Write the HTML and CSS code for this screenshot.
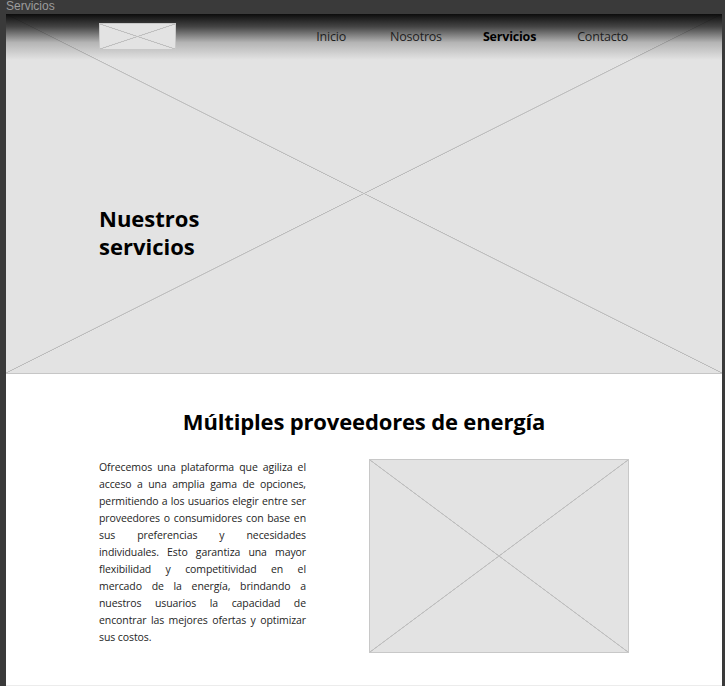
FILE: index.html
```html
<!DOCTYPE html>
<html lang="es">
<head>
<meta charset="utf-8">
<title>Servicios</title>
<link rel="stylesheet" href="styles.css">
</head>
<body>
<div class="titlebar">Servicios</div>
<div class="frame">
  <section class="hero">
    <header class="header">
      <div class="container header-inner">
        <div class="logo placeholder"></div>
        <nav class="nav">
          <a class="nav-link first">Inicio</a>
          <a class="nav-link">Nosotros</a>
          <a class="nav-link active">Servicios</a>
          <a class="nav-link">Contacto</a>
        </nav>
      </div>
    </header>
    <div class="container">
      <h1 class="hero-title">Nuestros<br>servicios</h1>
    </div>
  </section>
  <section class="content">
    <h2 class="content-title">Múltiples proveedores de energía</h2>
    <div class="container grid">
      <p class="text">Ofrecemos una plataforma que agiliza el acceso a una amplia gama de opciones, permitiendo a los usuarios elegir entre ser proveedores o consumidores con base en sus preferencias y necesidades individuales. Esto garantiza una mayor <span class="line">flexibilidad y competitividad en el</span> mercado de la energía, brindando a nuestros usuarios la capacidad de encontrar las mejores ofertas y optimizar sus costos.</p>
      <div class="image placeholder"></div>
    </div>
  </section>
</div>
</body>
</html>
```
FILE: styles.css
```css
* { box-sizing: border-box; }
html, body { margin: 0; padding: 0; }
body {
  background: #3a3a3a;
  width: 725px;
  height: 686px;
  overflow: hidden;
  font-family: "Open Sans", "Noto Sans", sans-serif;
}
.titlebar {
  height: 14px;
  padding-left: 6px;
  font-family: "Liberation Sans", Arial, sans-serif;
  font-size: 12px;
  line-height: 12px;
  color: #9c9c9c;
}
.frame {
  margin-left: 6px;
  width: 716px;
  height: 672px;
  background: #fff;
  border-bottom: 1px solid #ececec;
  overflow: hidden;
}
.placeholder {
  background-color: #e3e3e3;
  background-image:
    linear-gradient(to top right, transparent calc(50% - 0.7px), #bfbfbf calc(50% - 0.3px), #bfbfbf calc(50% + 0.3px), transparent calc(50% + 0.7px)),
    linear-gradient(to bottom right, transparent calc(50% - 0.7px), #bfbfbf calc(50% - 0.3px), #bfbfbf calc(50% + 0.3px), transparent calc(50% + 0.7px));
}
.hero {
  height: 360px;
  border-bottom: 1px solid #c6c6c6;
  background-color: #e3e3e3;
  background-image:
    linear-gradient(to top right, transparent calc(50% - 0.7px), #bdbdbd calc(50% - 0.3px), #bdbdbd calc(50% + 0.3px), transparent calc(50% + 0.7px)),
    linear-gradient(to bottom right, transparent calc(50% - 0.7px), #bdbdbd calc(50% - 0.3px), #bdbdbd calc(50% + 0.3px), transparent calc(50% + 0.7px));
}
.container {
  width: 530px;
  margin: 0 auto;
}
.header {
  height: 46px;
  background: linear-gradient(to bottom, rgba(8,8,8,0.98) 0%, rgba(30,30,30,0.8) 28%, rgba(110,110,110,0.4) 62%, rgba(227,227,227,0) 100%);
}
.header-inner {
  display: flex;
  align-items: flex-start;
  justify-content: space-between;
  padding-top: 9px;
}
.logo {
  width: 77px;
  height: 27px;
  border: 1px solid #c8c8c8;
}
.nav {
  display: flex;
  gap: 41px;
  padding-top: 5px;
  padding-right: 1px;
}
.nav-link {
  font-size: 12.5px;
  line-height: 18px;
  letter-spacing: -0.2px;
  color: #1e1e1e;
}
.nav-link.first {
  margin-right: 3px;
}
.nav-link.active {
  font-weight: 700;
  color: #000;
}
.hero-title {
  margin: 144px 0 0;
  font-size: 22px;
  line-height: 28px;
  font-weight: 700;
  color: #000;
}
.content {
  padding-top: 32px;
}
.content-title {
  margin: 0 0 23px;
  text-align: center;
  font-size: 22px;
  line-height: 30px;
  letter-spacing: -0.15px;
  font-weight: 700;
  color: #000;
}
.grid {
  display: grid;
  grid-template-columns: 260px 260px;
  gap: 10px;
  align-items: start;
}
.text {
  margin: 0;
  width: 207px;
  font-size: 10.5px;
  line-height: 17px;
  letter-spacing: -0.09px;
  text-align: justify;
  color: #1e1e1e;
}
.line {
  display: inline-block;
  width: 100%;
  text-align: justify;
  text-align-last: justify;
}
.image {
  width: 260px;
  height: 194px;
  border: 1px solid #c8c8c8;
}
```
